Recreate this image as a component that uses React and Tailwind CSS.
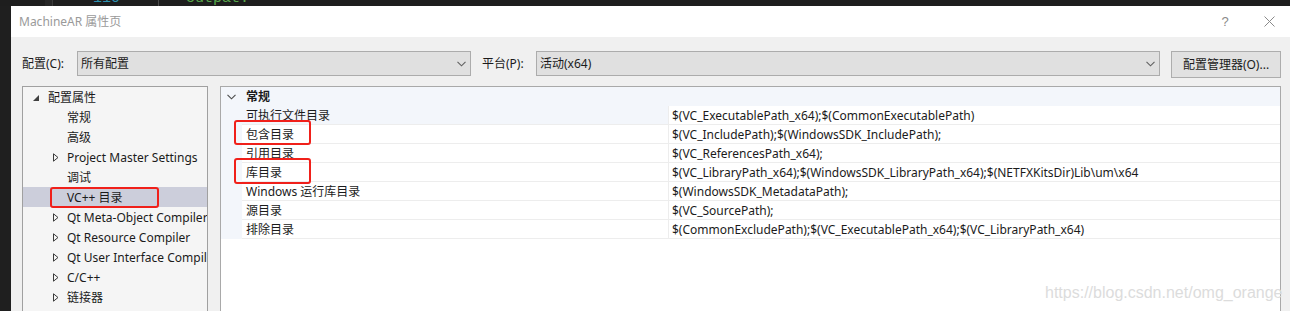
import React from "react";

const Collapsed = () => (
  <svg width="6" height="9" viewBox="0 0 6 9" className="block">
    <path d="M0.5 0.8 L5 4.5 L0.5 8.2 Z" fill="none" stroke="#3a3a3a" strokeWidth="1" />
  </svg>
);

const Expanded = () => (
  <svg width="6" height="6" viewBox="0 0 6 6" className="block">
    <path d="M6 0 L6 6 L0 6 Z" fill="#404040" />
  </svg>
);

const Chevron = ({ color = "#555" }) => (
  <svg width="9" height="6" viewBox="0 0 9 6" className="block">
    <polyline points="0.5,0.8 4.5,4.8 8.5,0.8" fill="none" stroke={color} strokeWidth="1.1" />
  </svg>
);

const tree = [
  { label: "常规", exp: false },
  { label: "高级", exp: false },
  { label: "Project Master Settings", exp: true },
  { label: "调试", exp: false },
  { label: "VC++ 目录", exp: false, sel: true },
  { label: "Qt Meta-Object Compiler", exp: true },
  { label: "Qt Resource Compiler", exp: true },
  { label: "Qt User Interface Compiler", exp: true },
  { label: "C/C++", exp: true },
  { label: "链接器", exp: true },
];

const props = [
  ["可执行文件目录", "$(VC_ExecutablePath_x64);$(CommonExecutablePath)"],
  ["包含目录", "$(VC_IncludePath);$(WindowsSDK_IncludePath);"],
  ["引用目录", "$(VC_ReferencesPath_x64);"],
  ["库目录", "$(VC_LibraryPath_x64);$(WindowsSDK_LibraryPath_x64);$(NETFXKitsDir)Lib\\um\\x64"],
  ["Windows 运行库目录", "$(WindowsSDK_MetadataPath);"],
  ["源目录", "$(VC_SourcePath);"],
  ["排除目录", "$(CommonExcludePath);$(VC_ExecutablePath_x64);$(VC_LibraryPath_x64)"],
];

export default function App() {
  return (
    <div className="relative w-[1290px] h-[311px] overflow-hidden bg-[#1e1e1e] flex flex-col font-['Noto_Sans','Noto_Sans_CJK_SC',sans-serif] text-[12px] text-[#1b1b1b]">
      {/* editor strip */}
      <div className="h-[6px] shrink-0 flex overflow-hidden">
        <div className="w-[45px] shrink-0" />
        <div className="w-[8px] shrink-0 bg-[#262626] border-r border-[#3a3a3a]" />
        <div className="w-[40px] shrink-0" />
        <div className="w-[24px] shrink-0 text-[15px] leading-[16px] -mt-[9px] text-[#2b91af] font-['Liberation_Mono',monospace]">110</div>
        <div className="w-[42px] shrink-0 border-r border-[#4a4a4a]" />
        <div className="w-[18px] shrink-0" />
        <div className="text-[15px] leading-[16px] -mt-[9px] text-[#57a64a] font-['Liberation_Mono',monospace]">-outpat.</div>
      </div>

      <div className="flex flex-1 min-h-0">
        <div className="w-[11px] shrink-0 bg-[#1f1f1f]" />
        <div className="flex-1 flex flex-col bg-[#f0f0f0] min-w-0">
          {/* title bar */}
          <div className="h-[31px] shrink-0 bg-white flex items-center pl-[8px]">
            <div className="flex-1 text-[#9a9a9a] text-[12px]">MachineAR 属性页</div>
            <div className="w-[46px] text-center text-[#8a8a8a] text-[13px] font-['Liberation_Sans',sans-serif]">?</div>
            <div className="w-[42px] flex justify-center">
              <svg width="11" height="11" viewBox="0 0 11 11">
                <path d="M0.5 0.5 L10.5 10.5 M10.5 0.5 L0.5 10.5" stroke="#8a8a8a" strokeWidth="1" />
              </svg>
            </div>
          </div>

          {/* body */}
          <div className="flex-1 min-h-0 overflow-hidden pl-[11px] pr-[9px] pt-[14px] flex flex-col">
            <div className="flex items-start shrink-0">
              <div className="w-[55px] h-[25px] flex items-center">配置(C):</div>
              <div className="w-[394px] h-[25px] border border-[#acacac] bg-[#e0e0e0] flex items-center justify-between pl-[3px] pr-[4px]">
                <span>所有配置</span>
                <Chevron color="#606060" />
              </div>
              <div className="ml-[11px] w-[54px] h-[25px] flex items-center">平台(P):</div>
              <div className="w-[624px] h-[25px] border border-[#acacac] bg-[#e0e0e0] flex items-center justify-between pl-[3px] pr-[4px]">
                <span>活动(x64)</span>
                <Chevron color="#606060" />
              </div>
              <div className="ml-[11px] w-[110px] h-[27px] border border-[#adadad] bg-[#e1e1e1] flex items-center justify-center">
                配置管理器(O)...
              </div>
            </div>

            <div className="mt-[8px] flex gap-[12px] shrink-0">
              {/* tree */}
              <div className="w-[186px] h-[260px] shrink-0 border border-[#a0a0a0] bg-[#f5f5f5] overflow-hidden">
                <div className="h-[20px] flex items-center pl-[10px] pt-[1px]">
                  <Expanded />
                  <span className="ml-[9px] whitespace-nowrap">配置属性</span>
                </div>
                {tree.map((t) => (
                  <div
                    key={t.label}
                    className={`h-[20px] flex items-center pl-[30px] pt-[1px] whitespace-nowrap ${t.sel ? "bg-[#cccedb]" : ""}`}
                  >
                    <div className="w-[14px] shrink-0">{t.exp ? <Collapsed /> : null}</div>
                    <span>{t.label}</span>
                  </div>
                ))}
              </div>

              {/* property grid */}
              <div className="w-[1061px] h-[260px] shrink-0 border border-[#a9a9a9] bg-white overflow-hidden">
                <div className="h-[19px] flex items-center bg-[#f3f6fb] pl-[6px] pt-[1px]">
                  <Chevron color="#4a4a4a" />
                  <span className="ml-[10px] font-bold">常规</span>
                </div>
                {props.map(([name, val], i) => (
                  <div key={name} className="h-[19px] flex">
                    <div className="w-[21px] shrink-0 bg-[#f3f6fb]" />
                    <div
                      className={`w-[426px] shrink-0 pl-[4px] pt-[1px] flex items-center border-b border-[#ededed] whitespace-nowrap ${i === 0 ? "bg-[#f3f6fb]" : ""}`}
                    >
                      {name}
                    </div>
                    <div className="flex-1 pl-[3px] pt-[1px] flex items-center border-b border-l border-[#ededed] whitespace-nowrap">
                      {val}
                    </div>
                  </div>
                ))}
              </div>
            </div>
          </div>
        </div>
      </div>

      {/* annotation boxes */}
      <div className="absolute left-[50px] top-[187px] w-[109px] h-[21px] border-2 border-[#f0201a] rounded-[3px]" />
      <div className="absolute left-[234px] top-[120px] w-[77px] h-[25px] border-2 border-[#f0201a] rounded-[3px]" />
      <div className="absolute left-[234px] top-[158px] w-[77px] h-[26px] border-2 border-[#f0201a] rounded-[3px]" />

      {/* watermark */}
      <div className="absolute left-[1045px] top-[282px] text-[16px] leading-[22px] text-[#dcdcdc] font-['Liberation_Sans',sans-serif] whitespace-nowrap">
        https://blog.csdn.net/omg_orange
      </div>
    </div>
  );
}
